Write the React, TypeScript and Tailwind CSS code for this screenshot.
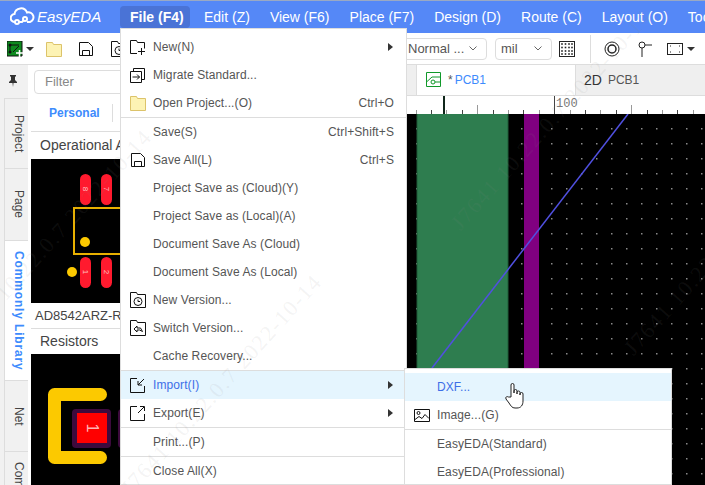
import React from 'react';

const stroke = '#111';

// Toolbar and menu icons
const FolderIcon = () => (
  <svg width="16" height="16" viewBox="0 0 16 16">
    <path d="M.5 1.5h6l1 2h8v12H.5z" fill="#fdf3b4" stroke="#dcc36a" />
  </svg>
);

const SaveIcon = () => (
  <svg width="16" height="16" viewBox="0 0 16 16" fill="none" stroke={stroke}>
    <path d="M1.5 1.5h9l4 4v9h-13z" />
    <path d="M4.5 14.5v-5h7v5" />
  </svg>
);

const NewIcon = () => (
  <svg width="16" height="16" viewBox="0 0 16 16" fill="none" stroke={stroke}>
    <path d="M7 14.5H.5v-13h6l1 2h7v6" />
    <path d="M8 12.5h7M11.5 9v7" />
  </svg>
);

const MigrateIcon = () => (
  <svg width="16" height="16" viewBox="0 0 16 16" fill="none" stroke={stroke}>
    <path d="M3.5 4.5v-3h11v11h-3" />
    <path d="M.5 4.5h11v11H.5z" />
    <path d="M2.5 10h7M7 7.5l2.5 2.5L7 12.5" />
  </svg>
);

const VersionIcon = ({ back }: { back?: boolean }) => (
  <svg width="16" height="16" viewBox="0 0 16 16" fill="none" stroke={stroke}>
    <path d="M.5 15.5V.5h6l1 2h8v13z" />
    {back ? (
      <path d="M4 9l3-3v2h3.5l2 3.5-3-1.500H7v2z" />
    ) : (
      <>
        <circle cx="8" cy="9.500" r="4" />
        <path d="M8 7.500v2h2" />
      </>
    )}
  </svg>
);

const ImportIcon = () => (
  <svg width="16" height="16" viewBox="0 0 16 16" fill="none" stroke={stroke}>
    <path d="M7 1.500H.5v14h14V9" />
    <path d="M14 2L8 8M8 4v4h4" />
  </svg>
);

const ExportIcon = () => (
  <svg width="16" height="16" viewBox="0 0 16 16" fill="none" stroke={stroke}>
    <path d="M7 1.500H.5v14h14V9" />
    <path d="M8 8l6-6M10 1.500h4.500V6" />
  </svg>
);

const ImageIcon = () => (
  <svg width="16" height="13" viewBox="0 0 16 13" fill="none" stroke={stroke}>
    <path d="M.5.500h15v12H.5z" />
    <circle cx="4.500" cy="4" r="1.500" />
    <path d="M1 10.500l4-3 3 2 3-4 4 4" />
  </svg>
);

const Caret = () => <span className="inline-block border-x-[4px] border-t-[4px] border-x-transparent border-t-[#333]" />;

const Chevron = () => (
  <svg width="8" height="5" viewBox="0 0 8 5" fill="none" stroke="#666">
    <path d="M.5.500L4 4 7.500.500" />
  </svg>
);

const topMenus = ['Edit (Z)', 'View (F6)', 'Place (F7)', 'Design (D)', 'Route (C)', 'Layout (O)', 'Tools'];

const Header = () => (
  <div className="flex h-[33px] shrink-0 items-center border-t border-[#9aa9c4] bg-[#5588f7] text-white">
    <div className="flex w-[120px] shrink-0 items-center pl-[10px]">
      <svg width="25" height="20" viewBox="0 0 25 20" fill="none" stroke="#fff" strokeWidth="2">
        <path d="M6 15H5a4 4 0 0 1-.5-8A6.500 6.500 0 0 1 17 5.500a4.800 4.800 0 0 1 3 9.500h-3" />
        <circle cx="7" cy="15" r="2" />
        <circle cx="15" cy="12" r="2" />
        <path d="M9 15h3l2-2" />
      </svg>
      <span className="ml-[2px] text-[15px] font-normal italic">EasyEDA</span>
    </div>
    <div className="flex h-[22px] w-[70px] shrink-0 items-center rounded-sm bg-[#4a73d6] pl-[10px] text-[14px] font-bold">File (F4)</div>
    <div className="ml-[14px] flex gap-[20px] text-[14px] whitespace-nowrap">
      {topMenus.map((m) => (
        <span key={m}>{m}</span>
      ))}
    </div>
  </div>
);

const Select = ({ label, width }: { label: string; width: string }) => (
  <div className={`flex h-[22px] shrink-0 items-center justify-between rounded-sm border border-[#ddd] pl-[5px] pr-[9px] text-[13px] text-[#555] ${width}`}>
    <span>{label}</span>
    <Chevron />
  </div>
);

const Toolbar = () => (
  <div className="flex h-[32px] shrink-0 items-center border-b border-[#ddd] bg-white">
    <svg className="ml-[7px]" width="16" height="16" viewBox="0 0 16 16">
      <path d="M0 0h15v15H0z" fill="#0d8a1f" stroke="#111" />
      <path d="M3 4h9M3 4v7M6 11l6-6" stroke="#111" fill="none" />
      <circle cx="3" cy="4" r="1.500" fill="#111" />
      <circle cx="3" cy="11" r="1.500" fill="#111" />
      <path d="M9 12h7M12.500 9v7" stroke="#fff" strokeWidth="1.500" />
    </svg>
    <span className="ml-[3px] flex"><Caret /></span>
    <span className="ml-[12px] flex"><FolderIcon /></span>
    <span className="ml-[16px] flex"><SaveIcon /></span>
    <span className="ml-[17px] flex"><VersionIcon /></span>
    <div className="ml-[275px] flex items-center">
      <Select label="Normal ..." width="w-[85px]" />
      <div className="ml-[8px]"><Select label="mil" width="w-[57px]" /></div>
      <svg className="ml-[7px]" width="16" height="16" viewBox="0 0 16 16">
        <rect x=".5" y=".5" width="15" height="15" fill="none" stroke="#222" />
        {[3, 6.500, 10, 13].flatMap((x) =>
          [3, 6.500, 10, 13].map((y) => <rect key={`${x}-${y}`} x={x - 0.8} y={y - 0.8} width="1.600" height="1.600" fill="#222" />)
        )}
      </svg>
      <span className="ml-[15px] mr-[13px] h-[28px] w-px bg-[#ddd]" />
      <svg width="16" height="16" viewBox="0 0 16 16" fill="none" stroke="#222">
        <circle cx="8" cy="8" r="7" />
        <circle cx="8" cy="8" r="4" strokeWidth="1.500" />
      </svg>
      <svg className="ml-[17px]" width="15" height="16" viewBox="0 0 15 16" fill="none" stroke="#222">
        <circle cx="5" cy="4" r="3" />
        <path d="M5 7v9M8 4h7" />
      </svg>
      <svg className="ml-[15px]" width="16" height="12" viewBox="0 0 16 12" fill="none" stroke="#222">
        <rect x=".5" y=".5" width="15" height="11" />
        <path d="M3 3h1M12 3h1M3 9h1M12 9h1" />
      </svg>
      <span className="ml-[4px] flex"><Caret /></span>
    </div>
  </div>
);

const SideTab = ({ label, height, active, cut }: { label: string; height: string; active?: boolean; cut?: boolean }) => (
  <div
    className={`flex w-[24px] shrink-0 items-start overflow-hidden border-b border-l border-[#ddd] text-[12px] [writing-mode:vertical-rl] ${height} ${
      cut ? 'justify-start pt-[10px]' : 'justify-center'
    } ${active ? 'bg-white font-bold tracking-[0.85px] text-[#3d8bfd]' : 'bg-[#f1f1f1] text-[#444]'}`}
  >
    {label}
  </div>
);

const Footprint8 = () => (
  <svg className="h-[144px] w-[260px] shrink-0" viewBox="0 0 260 144">
    <rect width="260" height="144" fill="#000" />
    <rect x="43" y="49" width="80" height="46" fill="none" stroke="#e8b000" strokeWidth="2" />
    {[
      [49, 15, '8'],
      [70, 15, '7'],
      [49, 98, '1'],
      [70, 98, '2']
    ].map(([x, y, t]) => (
      <g key={String(t)}>
        <rect x={x as number} y={y as number} width="11" height="31" rx="5.500" fill="#ff1a2e" />
        <text
          x={(x as number) + 5.5}
          y={(y as number) + 18}
          fontSize="8"
          fill="#ffc0c0"
          textAnchor="middle"
          transform={`rotate(90 ${(x as number) + 5.5} ${(y as number) + 15})`}
        >
          {t}
        </text>
      </g>
    ))}
    <circle cx="54" cy="83" r="5" fill="#fcc900" />
    <circle cx="41" cy="113" r="5" fill="#fcc900" />
  </svg>
);

const FootprintRes = () => (
  <svg className="h-[131px] w-[260px] shrink-0" viewBox="0 0 260 131">
    <rect width="260" height="131" fill="#000" />
    <path d="M69.500 40.500H23.500v63H69.500" fill="none" stroke="#fcc900" strokeWidth="13" strokeLinecap="round" strokeLinejoin="round" />
    <rect x="41" y="55" width="39" height="39" rx="4" fill="#3d0a3d" />
    <rect x="46" y="59" width="30" height="30" fill="#ff0000" />
    <text x="61" y="79" fontSize="16" fill="#ffb3b3" textAnchor="middle" transform="rotate(90 61 74)">1</text>
    <rect x="87" y="55" width="39" height="39" rx="4" fill="#3d0a3d" />
  </svg>
);

const LibraryPanel = () => (
  <div className="flex w-[372px] shrink-0 flex-col border-r border-[#ddd] bg-white pl-[3px]">
    <div className="ml-[3px] mt-[5px] flex h-[24px] w-[300px] shrink-0 items-center rounded-sm border border-[#ddd] pl-[10px] text-[13px] text-[#888]">Filter</div>
    <div className="flex h-[38px] shrink-0 items-center border-b border-[#ddd] pl-[18px]">
      <span className="text-[12px] font-bold text-[#3d8bfd]">Personal</span>
      <span className="ml-[12px] h-[18px] w-px bg-[#ddd]" />
    </div>
    <div className="flex h-[27px] shrink-0 items-center pl-[9px] text-[14px] text-[#444]">Operational Amplifier</div>
    <Footprint8 />
    <div className="flex h-[26px] shrink-0 items-center border-b border-[#ddd] pl-[4px] text-[13px] text-[#444]">AD8542ARZ-REEL7</div>
    <div className="flex h-[25px] shrink-0 items-center pl-[9px] text-[14px] text-[#444]">Resistors</div>
    <FootprintRes />
  </div>
);

const Ruler = () => {
  const ticks = Array.from({ length: 22 }, (_, i) => i);
  return (
    <svg className="block h-[18px] w-full" viewBox="400 96 305 18">
      <rect x="400" y="96" width="305" height="18" fill="#fff" />
      {ticks.map((i) => {
        const x = Math.round(415.5 + i * 15.4);
        const k = i - 9;
        const top = k === 0 ? 96 : k % 5 === 0 ? 105 : 110;
        return <path key={i} d={`M${x + 0.5} ${top}V114`} stroke={i % 2 === 0 ? '#999' : '#444'} />;
      })}
      <path d="M444 96V114" stroke="#10261b" strokeWidth="2" />
      <text x="556" y="107" fontSize="12" fontFamily="'Liberation Mono', monospace" fill="#777">100</text>
    </svg>
  );
};

const Canvas = () => {
  const xs = Array.from({ length: 21 }, (_, i) => 401 + i * 15);
  const ys = Array.from({ length: 25 }, (_, i) => 128 + i * 15);
  return (
    <svg className="block h-[371px] w-full" viewBox="400 114 305 371">
      <rect x="400" y="114" width="305" height="371" fill="#000" />
      {xs.flatMap((x) =>
        ys.map((y) => <rect key={`${x}-${y}`} x={x} y={y} width="1.500" height="1.500" fill="#8a8a8a" />)
      )}
      <rect x="417" y="113" width="91" height="373" fill="#2e7d4f" stroke="#1f5c38" />
      <rect x="524" y="114" width="15" height="371" fill="#800080" />
      <path d="M628 114L432 368" stroke="#5050e0" strokeWidth="1.500" />
    </svg>
  );
};

const Editor = () => (
  <div className="flex min-w-0 flex-1 flex-col">
    <div className="flex h-[31px] shrink-0 items-stretch border-b border-[#ddd] bg-[#efefef] pl-[16px]">
      <div className="flex w-[160px] items-center border-x border-[#ddd] bg-white pl-[9px] text-[12px] text-[#3d8bfd]">
        <svg width="16" height="16" viewBox="0 0 16 16" fill="none" stroke="#11992a">
          <path d="M.5.500h14v14H.5z" />
          <circle cx="7" cy="10" r="2" />
          <path d="M.5 10L6 5h8.500M9 10h5.500" />
        </svg>
        <span className="ml-[6px]"><span className="mr-[2px] text-[#555]">*</span>PCB1</span>
      </div>
      <div className="flex flex-1 items-center pl-[8px] text-[12px] text-[#555]">
        <span className="text-[14px] text-[#333]">2D</span>
        <span className="ml-[6px]">PCB1</span>
      </div>
    </div>
    <Ruler />
    <Canvas />
  </div>
);

interface MenuRowProps {
  label: string;
  icon?: React.ReactNode;
  shortcut?: string;
  arrow?: boolean;
  active?: boolean;
}

const MenuRow = ({ label, icon, shortcut, arrow, active }: MenuRowProps) => (
  <div className={`flex h-[28px] items-center pl-[9px] pr-[12px] text-[12px] tracking-[0.1px] ${active ? 'bg-[#e5f5fe] text-[#3d6fe8]' : 'text-[#555]'}`}>
    <span className="flex w-[23px] shrink-0 items-center">{icon}</span>
    <span className="flex-1 whitespace-nowrap">{label}</span>
    {shortcut && <span>{shortcut}</span>}
    {arrow && <span className="mr-[1px] inline-block border-y-[4px] border-l-[5px] border-y-transparent border-l-[#333]" />}
  </div>
);

const Sep = () => <div className="h-px bg-[#ddd]" />;

const FileMenu = () => (
  <div className="absolute left-[120px] top-[28px] h-[457px] w-[287px] border border-[#ddd] bg-white pt-[4px]">
    <MenuRow label="New(N)" icon={<NewIcon />} arrow />
    <MenuRow label="Migrate Standard..." icon={<MigrateIcon />} />
    <MenuRow label="Open Project...(O)" icon={<FolderIcon />} shortcut="Ctrl+O" />
    <Sep />
    <MenuRow label="Save(S)" shortcut="Ctrl+Shift+S" />
    <MenuRow label="Save All(L)" icon={<SaveIcon />} shortcut="Ctrl+S" />
    <MenuRow label="Project Save as (Cloud)(Y)" />
    <MenuRow label="Project Save as (Local)(A)" />
    <MenuRow label="Document Save As (Cloud)" />
    <MenuRow label="Document Save As (Local)" />
    <MenuRow label="New Version..." icon={<VersionIcon />} />
    <MenuRow label="Switch Version..." icon={<VersionIcon back />} />
    <MenuRow label="Cache Recovery..." />
    <Sep />
    <MenuRow label="Import(I)" icon={<ImportIcon />} arrow active />
    <MenuRow label="Export(E)" icon={<ExportIcon />} arrow />
    <Sep />
    <MenuRow label="Print...(P)" />
    <Sep />
    <MenuRow label="Close All(X)" />
  </div>
);

const ImportMenu = () => (
  <div className="absolute left-[404px] top-[368px] h-[117px] w-[268px] overflow-hidden border border-[#ddd] bg-white pt-[4px]">
    <MenuRow label="DXF..." active />
    <MenuRow label="Image...(G)" icon={<ImageIcon />} />
    <Sep />
    <MenuRow label="EasyEDA(Standard)" />
    <MenuRow label="EasyEDA(Professional)" />
  </div>
);

const HandCursor = () => (
  <svg className="absolute left-[505px] top-[382px]" width="20" height="27" viewBox="0 0 20 27" fill="#fff" stroke="#222" strokeLinejoin="round">
    <path d="M6 15V3a1.500 1.500 0 0 1 3 0v8V9a1.500 1.500 0 0 1 3 0v3-1.500a1.500 1.500 0 0 1 3 0V13v-1a1.500 1.500 0 0 1 3 0v7c0 4-2 7-6 7h-2c-3 0-4-2-6-5l-3-4c-1-2 1-3 2.500-2z" />
  </svg>
);

// Faint diagonal licence stamp that runs over the whole window
const stamps = ['left-[455px] top-[210px]', 'left-[-45px] top-[330px]', 'left-[125px] top-[475px]', 'left-[628px] top-[335px]'];

const Watermarks = () => (
  <div className="pointer-events-none absolute inset-0 overflow-hidden font-['Liberation_Serif',serif] text-[22px] tracking-[1.5px] text-[#8a8a8a]/10">
    {stamps.map((cls) => (
      <span key={cls} className={`absolute origin-left -rotate-[48deg] whitespace-nowrap ${cls}`}>
        J7641 10.22.0.7 2022-10-14
      </span>
    ))}
  </div>
);

export default function App() {
  return (
    <div className="relative flex h-[485px] w-[705px] flex-col overflow-hidden bg-white font-['Liberation_Sans',Arial,sans-serif]">
      <Header />
      <Toolbar />
      <div className="flex min-h-0 flex-1">
        <div className="flex w-[28px] shrink-0 flex-col items-end overflow-hidden bg-[#f1f1f1]">
          <svg className="mb-[11px] mr-[10px] mt-[10px] shrink-0" width="10" height="12" viewBox="0 0 10 12" fill="#333">
            <path d="M2 0h6v1L7 2v3l2 2v1H5.500L5 12l-.5-4H1V7l2-2V2L2 1z" />
          </svg>
          <SideTab label="Project" height="h-[71px] border-t" />
          <SideTab label="Page" height="h-[72px]" />
          <SideTab label="Commonly Library" height="h-[140px]" active />
          <SideTab label="Net" height="h-[71px]" />
          <SideTab label="Components" height="h-[60px]" cut />
        </div>
        <LibraryPanel />
        <Editor />
      </div>
      <FileMenu />
      <ImportMenu />
      <HandCursor />
      <Watermarks />
    </div>
  );
}
